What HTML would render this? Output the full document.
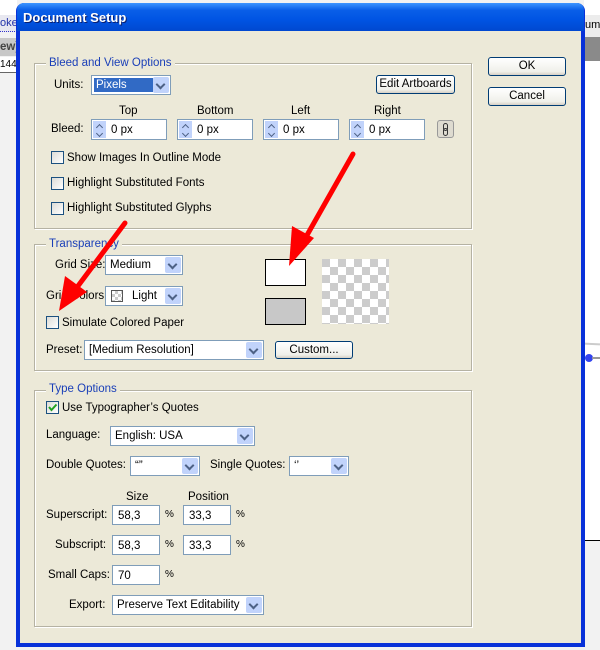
<!DOCTYPE html>
<html><head><meta charset="utf-8"><style>
*{margin:0;padding:0;box-sizing:border-box}
body{width:600px;height:650px;overflow:hidden;position:relative;background:#f2f2f2;font-family:"Liberation Sans",sans-serif;font-size:11.5px;color:#000}
.a{position:absolute}
.t{position:absolute;white-space:nowrap;line-height:14px}
.grp{position:absolute;border:1px solid #b5b2a3;box-shadow:1px 1px 0 #fff inset,1px 1px 0 #fff}
.lg{position:absolute;background:#ece9d8;color:#1a3fb8;padding:0 3px;line-height:14px;white-space:nowrap}
.sel{position:absolute;background:#fff;border:1px solid #7f9db9;height:20px}
.sel .ar{position:absolute;right:1px;top:1px;bottom:1px;width:16px;background:#c1d3fb;border-radius:2px}
.sel .ar:after{content:"";position:absolute;left:4px;top:4px;width:5px;height:5px;border-right:2px solid #4d6185;border-bottom:2px solid #4d6185;transform:rotate(45deg)}
.sel span{position:absolute;left:4px;top:2px;white-space:nowrap;line-height:14px}
.btn{position:absolute;border:1px solid #003c74;border-radius:3px;background:linear-gradient(#fff,#f0f0ea 80%,#d6d0c5);text-align:center;line-height:16px;white-space:nowrap}
.cb{position:absolute;width:13px;height:13px;border:1px solid #1c5180;background:linear-gradient(135deg,#dcdcd7,#fff)}
.inp{position:absolute;background:#fff;border:1px solid #7f9db9;height:20px}
.inp span{position:absolute;left:8px;top:3px;line-height:14px}
.spin{position:absolute;background:#fff;border:1px solid #7f9db9;height:21px}
.spin .s{position:absolute;left:1px;top:1px;width:13px;bottom:1px;background:#c1d3fb}
.spin .s:before,.spin .s:after{content:"";position:absolute;left:4px;width:4px;height:4px;border-left:1.5px solid #4d6185;border-top:1.5px solid #4d6185}
.spin .s:before{top:4px;transform:rotate(45deg)}
.spin .s:after{top:10px;transform:rotate(225deg)}
.spin span{position:absolute;left:19px;top:3px;line-height:14px}
</style></head><body>
<div class="a" style="left:0;top:0;width:17px;height:15px;background:#fff"></div>
<div class="a" style="left:0;top:15px;width:17px;height:17px;background:#e8e8f0;border-bottom:1px dotted #33c"></div>
<div class="t" style="left:0;top:16px;color:#2233aa;font-size:11px">oke</div>
<div class="a" style="left:0;top:38px;width:17px;height:18px;background:#c8c8c8"></div>
<div class="t" style="left:0;top:40px;font-weight:bold;color:#444">ew)</div>
<div class="a" style="left:0;top:57px;width:17px;height:16px;background:#fff;border-bottom:1px solid #666"></div>
<div class="t" style="left:0;top:58px;font-size:10px">1440</div>
<div class="a" style="left:0;top:74px;width:17px;height:576px;background:#f2f2f2"></div>
<div class="a" style="left:584px;top:0;width:16px;height:15px;background:#fff"></div>
<div class="a" style="left:584px;top:15px;width:16px;height:22px;background:#ececec"></div>
<div class="t" style="left:585px;top:18px;font-size:11px">ume</div>
<div class="a" style="left:584px;top:37px;width:16px;height:24px;background:#8a8a8a"></div>
<div class="a" style="left:584px;top:61px;width:16px;height:480px;background:#fff;border-bottom:1px solid #000"></div>
<div class="a" style="left:584px;top:343px;width:16px;height:2px;background:#ccc;transform:rotate(3deg)"></div>
<div class="a" style="left:585px;top:354px;width:8px;height:8px;border-radius:50%;background:#3344ee"></div>
<div class="a" style="left:592px;top:357px;width:8px;height:2px;background:#999"></div>
<div class="a" style="left:16px;top:3px;width:569px;height:644px;background:#0831d9;border-radius:8px 8px 0 0"></div>
<div class="a" style="left:17px;top:3px;width:567px;height:28px;border-radius:7px 7px 0 0;background:linear-gradient(#3d95ff,#0a5fe8 25%,#0054e3 60%,#0048d0)"></div>
<div class="t" style="left:23px;top:11px;color:#fff;font-weight:bold;font-size:13px;text-shadow:1px 1px #0a1e6e">Document Setup</div>
<div class="a" style="left:20px;top:31px;width:561px;height:612px;background:#ece9d8"></div>

<div class="grp" style="left:34px;top:63px;width:438px;height:166px"></div>
<div class="lg" style="left:46px;top:56px">Bleed and View Options</div>
<div class="t" style="left:54px;top:78px">Units:</div>
<div class="sel" style="left:91px;top:75px;width:80px"><div class="a" style="left:2px;top:2px;width:59px;height:14px;background:#316ac5"></div><span style="color:#fff;top:2px">Pixels</span><div class="ar"></div></div>
<div class="btn" style="left:376px;top:75px;width:79px;height:19px">Edit Artboards</div>
<div class="t" style="left:119px;top:104px">Top</div>
<div class="t" style="left:197px;top:104px">Bottom</div>
<div class="t" style="left:291px;top:104px">Left</div>
<div class="t" style="left:374px;top:104px">Right</div>
<div class="t" style="left:51px;top:122px">Bleed:</div>
<div class="spin" style="left:91px;top:119px;width:76px"><div class="s"></div><span>0 px</span></div>
<div class="spin" style="left:177px;top:119px;width:76px"><div class="s"></div><span>0 px</span></div>
<div class="spin" style="left:263px;top:119px;width:76px"><div class="s"></div><span>0 px</span></div>
<div class="spin" style="left:349px;top:119px;width:76px"><div class="s"></div><span>0 px</span></div>
<div class="a" style="left:437px;top:120px;width:17px;height:18px;border:1px solid #999;border-radius:3px;background:#dedbd0"></div>
<div class="a" style="left:443px;top:123px;width:5px;height:8px;border:1.5px solid #333;border-radius:3px"></div>
<div class="a" style="left:443px;top:128px;width:5px;height:8px;border:1.5px solid #333;border-radius:3px"></div>
<div class="cb" style="left:51px;top:151px"></div><div class="t" style="left:67px;top:151px">Show Images In Outline Mode</div>
<div class="cb" style="left:51px;top:177px"></div><div class="t" style="left:67px;top:176px">Highlight Substituted Fonts</div>
<div class="cb" style="left:51px;top:202px"></div><div class="t" style="left:67px;top:201px">Highlight Substituted Glyphs</div>

<div class="btn" style="left:488px;top:57px;width:78px;height:19px">OK</div>
<div class="btn" style="left:488px;top:87px;width:78px;height:19px">Cancel</div>

<div class="grp" style="left:34px;top:244px;width:438px;height:127px"></div>
<div class="lg" style="left:46px;top:237px">Transparency</div>
<div class="t" style="left:55px;top:258px">Grid Size:</div>
<div class="sel" style="left:105px;top:255px;width:78px"><span>Medium</span><div class="ar"></div></div>
<div class="t" style="left:46px;top:289px">Grid Colors:</div>
<div class="sel" style="left:105px;top:286px;width:78px"><div class="a" style="left:5px;top:3px;width:12px;height:12px;border:1px solid #555;background:conic-gradient(#ccc 25%,#fff 0 50%,#ccc 0 75%,#fff 0) 0 0/6px 6px"></div><span style="left:26px">Light</span><div class="ar"></div></div>
<div class="cb" style="left:46px;top:316px"></div><div class="t" style="left:62px;top:316px">Simulate Colored Paper</div>
<div class="t" style="left:46px;top:343px">Preset:</div>
<div class="sel" style="left:84px;top:340px;width:180px"><span>[Medium Resolution]</span><div class="ar"></div></div>
<div class="btn" style="left:275px;top:341px;width:78px;height:18px">Custom...</div>
<div class="a" style="left:265px;top:259px;width:41px;height:27px;background:#fff;border:1px solid #000"></div>
<div class="a" style="left:265px;top:298px;width:41px;height:27px;background:#c8c8c8;border:1px solid #000"></div>
<div class="a" style="left:322px;top:259px;width:67px;height:65px;background:conic-gradient(#fff 25%,#ccc 0 50%,#fff 0 75%,#ccc 0) 0 0/16px 16px"></div>

<div class="grp" style="left:34px;top:390px;width:438px;height:237px"></div>
<div class="lg" style="left:46px;top:382px">Type Options</div>
<div class="cb" style="left:46px;top:401px"></div>
<svg class="a" style="left:46px;top:401px" width="13" height="13"><path d="M3 6 L5.5 9 L10.5 3.5" stroke="#21a121" stroke-width="2" fill="none"/></svg>
<div class="t" style="left:62px;top:401px">Use Typographer’s Quotes</div>
<div class="t" style="left:46px;top:428px">Language:</div>
<div class="sel" style="left:110px;top:426px;width:145px"><span>English: USA</span><div class="ar"></div></div>
<div class="t" style="left:46px;top:458px">Double Quotes:</div>
<div class="sel" style="left:130px;top:456px;width:70px"><span>“”</span><div class="ar"></div></div>
<div class="t" style="left:210px;top:458px">Single Quotes:</div>
<div class="sel" style="left:289px;top:456px;width:60px"><span>‘’</span><div class="ar"></div></div>
<div class="t" style="left:126px;top:490px">Size</div>
<div class="t" style="left:188px;top:490px">Position</div>
<div class="t" style="left:46px;top:508px">Superscript:</div>
<div class="inp" style="left:112px;top:505px;width:48px"><span style="left:5px">58,3</span></div>
<div class="t" style="left:165px;top:508px;font-size:10px">%</div>
<div class="inp" style="left:183px;top:505px;width:48px"><span style="left:5px">33,3</span></div>
<div class="t" style="left:236px;top:508px;font-size:10px">%</div>
<div class="t" style="left:55px;top:538px">Subscript:</div>
<div class="inp" style="left:112px;top:535px;width:48px"><span style="left:5px">58,3</span></div>
<div class="t" style="left:165px;top:538px;font-size:10px">%</div>
<div class="inp" style="left:183px;top:535px;width:48px"><span style="left:5px">33,3</span></div>
<div class="t" style="left:236px;top:538px;font-size:10px">%</div>
<div class="t" style="left:48px;top:568px">Small Caps:</div>
<div class="inp" style="left:112px;top:565px;width:48px"><span style="left:5px">70</span></div>
<div class="t" style="left:165px;top:568px;font-size:10px">%</div>
<div class="t" style="left:69px;top:598px">Export:</div>
<div class="sel" style="left:112px;top:595px;width:152px"><span>Preserve Text Editability</span><div class="ar"></div></div>

<svg class="a" style="left:0;top:0" width="600" height="650">
<g stroke="#f00" stroke-width="5" stroke-linecap="round" fill="#f00">
<line x1="353" y1="154" x2="302" y2="244"/>
<line x1="125" y1="223" x2="75" y2="290"/>
</g>
<polygon points="289,266 292,226 314,238" fill="#f00"/>
<polygon points="59,311 65,276 87,292" fill="#f00"/>
</svg>
</body></html>
